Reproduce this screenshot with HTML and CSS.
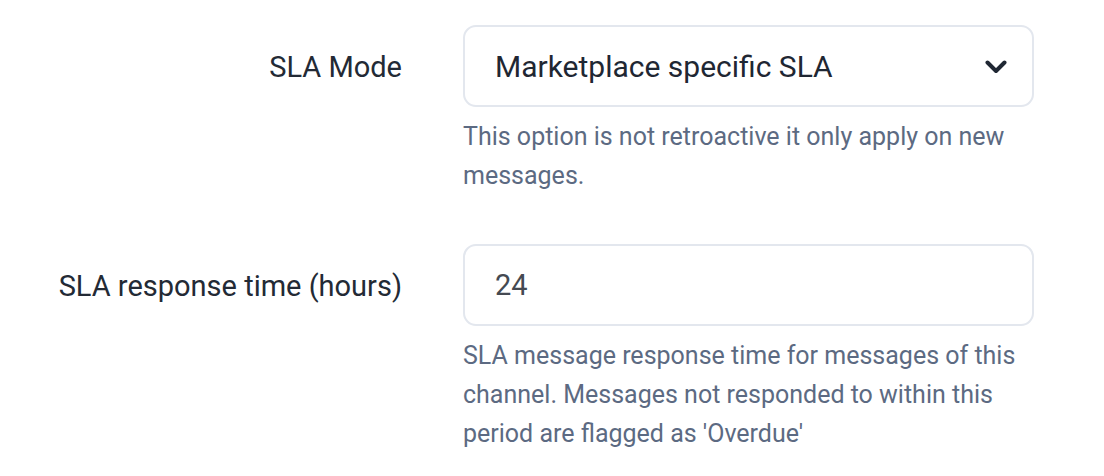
FILE: index.html
```html
<!DOCTYPE html>
<html lang="en">
<head>
  <meta charset="UTF-8" />
  <title>Channel SLA Settings</title>
  <link rel="stylesheet" href="styles.css">
</head>
<body>

  <form class="sla-form">
    <label class="field-label" for="sla-mode">SLA Mode</label>
    <div class="field">
      <div class="select-wrap">
        <select id="sla-mode" class="control">
          <option>Marketplace specific SLA</option>
          <option>Global SLA</option>
        </select>
        <svg class="chevron" viewBox="0 0 22 14" width="22" height="14">
          <path d="M2.5 2.5 L11 11 L19.5 2.5" fill="none" stroke="#1f2733" stroke-width="4" stroke-linecap="round" stroke-linejoin="round"/>
        </svg>
      </div>
      <p class="help">This option is not retroactive it only apply on new messages.</p>
    </div>

    <label class="field-label" for="sla-hours">SLA response time (hours)</label>
    <div class="field">
      <input id="sla-hours" class="control control-input" type="number" value="24" />
      <p class="help">SLA message response time for messages of this channel. Messages not responded to within this period are flagged as 'Overdue'</p>
    </div>
  </form>

</body>
</html>
```

FILE: styles.css
```css
body {
  margin: 0;
  background: #fff;
  font-family: Roboto, "Liberation Sans", Arial, sans-serif;
  color: #1f2733;
}
.sla-form {
  display: grid;
  grid-template-columns: 344px 571px;
  column-gap: 61px;
  row-gap: 49px;
  padding: 25px 0 0 58px;
}
.field-label {
  text-align: right;
  font-size: 29px;
  height: 82px;
  line-height: 84px;
  white-space: nowrap;
  color: #232a35;
}
.select-wrap {
  position: relative;
}
.control {
  display: block;
  box-sizing: border-box;
  width: 100%;
  height: 82px;
  padding: 0 30px;
  border: 2px solid #e3e7ee;
  border-radius: 13px;
  background: #fff;
  font-family: inherit;
  font-size: 30px;
  color: #1f2733;
  appearance: none;
  -webkit-appearance: none;
  outline: none;
}
.control-input {
  color: #454a52;
  font-size: 29px;
}
.control-input::-webkit-inner-spin-button,
.control-input::-webkit-outer-spin-button {
  -webkit-appearance: none;
  margin: 0;
}
.chevron {
  position: absolute;
  right: 27px;
  top: 35px;
  pointer-events: none;
}
.help {
  margin: 10px 0 0;
  font-size: 25px;
  line-height: 39px;
  color: #5c6a82;
}
```
